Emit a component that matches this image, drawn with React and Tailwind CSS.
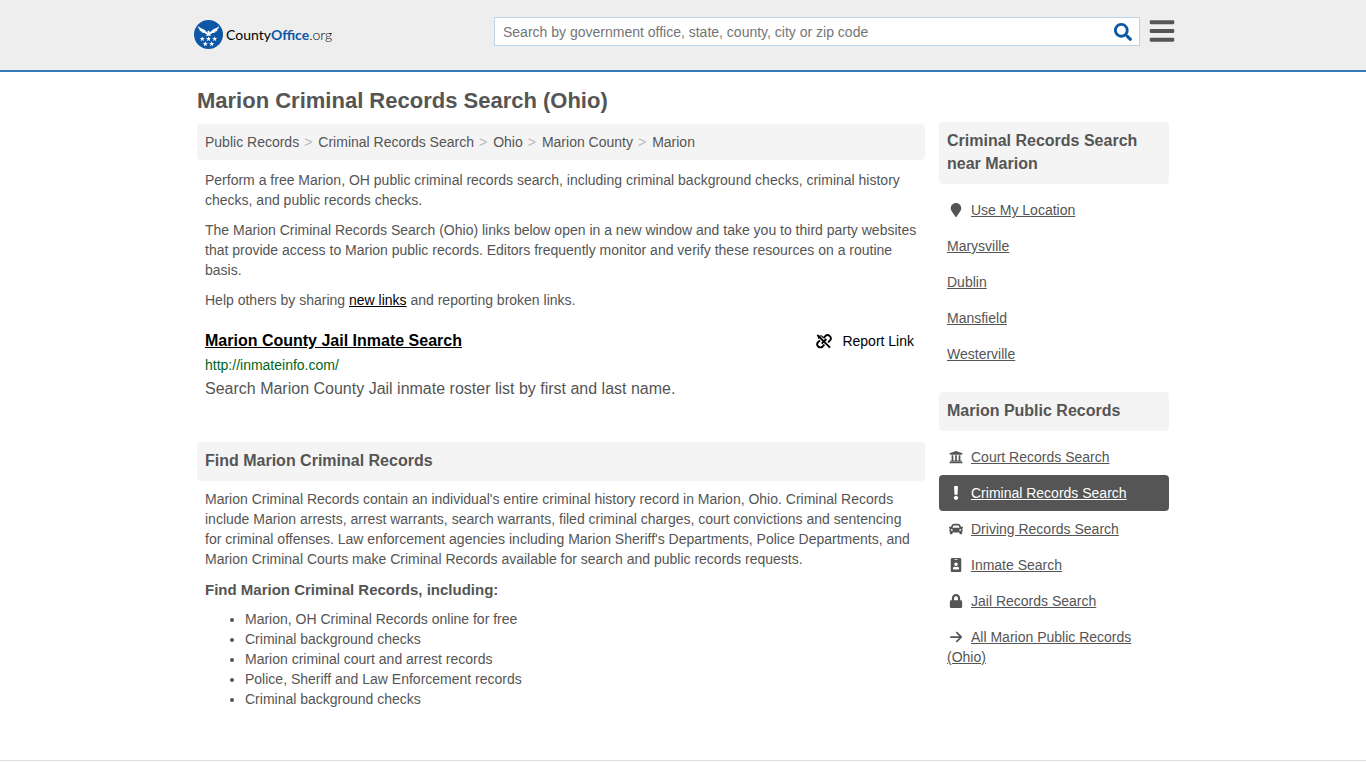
import {
  FaBars,
  FaCar,
  FaExclamation,
  FaIdBadge,
  FaLock,
  FaMapMarker,
  FaSearch,
  FaUniversity,
} from "react-icons/fa";
import { FaArrowRight } from "react-icons/fa6";

const crumbs = ["Public Records", "Criminal Records Search", "Ohio", "Marion County", "Marion"];

const nearby = [
  { label: "Use My Location", Icon: FaMapMarker },
  { label: "Marysville" },
  { label: "Dublin" },
  { label: "Mansfield" },
  { label: "Westerville" },
];

const records = [
  { label: "Court Records Search", Icon: FaUniversity },
  { label: "Criminal Records Search", Icon: FaExclamation, active: true },
  { label: "Driving Records Search", Icon: FaCar },
  { label: "Inmate Search", Icon: FaIdBadge },
  { label: "Jail Records Search", Icon: FaLock },
  { label: "All Marion Public Records (Ohio)", Icon: FaArrowRight },
];

const including = [
  "Marion, OH Criminal Records online for free",
  "Criminal background checks",
  "Marion criminal court and arrest records",
  "Police, Sheriff and Law Enforcement records",
  "Criminal background checks",
];

const STAR =
  "M0-2.700 .65-.9 2.570-.83 1.050 .34 1.590 2.180 0 1.100-1.590 2.180-1.050 .34-2.570-.83-.65-.9Z";
const stars = [
  [8.3, 19],
  [14.5, 19],
  [20.7, 19],
  [11.3, 24],
  [17.7, 24],
];

function Emblem() {
  return (
    <svg viewBox="0 0 29 29" className="size-[29px]" aria-hidden="true">
      <circle cx="14.5" cy="14.5" r="14.5" fill="#0d57a6" />
      <g fill="#fff">
        <path d="M4 6C5.500 8 8 8.300 10 9.600 11.300 10.500 12.300 11.600 13.200 12.800L14 11.900 13.100 11.300 14.500 10.600 15.600 11.500 15.800 12.800C16.700 11.600 17.700 10.500 19 9.600 21 8.300 23.500 8 25 6 25 7.800 24.200 9 22.800 9.600L23.900 9.700C23.200 11 22 11.600 20.700 11.800L21.600 12.100C20.600 13 19.400 13.200 18.200 13.100 17.500 14 16.700 14.500 15.900 14.700L17.300 16.300 14.500 15.500 11.700 16.300 13.100 14.700C12.300 14.500 11.500 14 10.800 13.100 9.600 13.200 8.400 13 7.400 12.100L8.300 11.800C7 11.600 5.800 11 5.100 9.700L6.200 9.600C4.800 9 4 7.800 4 6Z" />
        {stars.map(([x, y]) => (
          <path key={`${x}-${y}`} d={STAR} transform={`translate(${x} ${y})`} />
        ))}
      </g>
    </svg>
  );
}

function BrokenLinkIcon() {
  return (
    <svg
      viewBox="0 0 24 24"
      className="size-4"
      fill="none"
      stroke="currentColor"
      strokeWidth="2.8"
      aria-hidden="true"
    >
      <path d="M2 3 21 22" />
      <path d="M11.500 7.500 14 4.800A4.700 4.700 0 0 1 20.700 11.500L18 14" />
      <path d="M12.500 17.500 10 20.200A4.700 4.700 0 0 1 3.300 13.500L6 11" />
      <path d="M3.500 8.500C3.500 6 5.500 4 8 4L11.500 7.500" strokeWidth="1.600" />
      <path d="M15.500 9 8.500 16" />
    </svg>
  );
}

function SectionTitle({ children }) {
  return (
    <h2 className="rounded bg-[#f4f4f4] px-2 pt-[7px] pb-[9px] text-base leading-[23px] font-bold">
      {children}
    </h2>
  );
}

function SideList({ items }) {
  return (
    <ul className="mt-2">
      {items.map(({ label, Icon, active }) => (
        <li key={label} className={active ? "rounded bg-[#555] p-2 text-white" : "p-2"}>
          {Icon && (
            <span className="mr-1.5 inline-flex w-[18px] justify-center align-[-2px]">
              <Icon className="size-3.5" aria-hidden="true" />
            </span>
          )}
          <a href="#" className="underline">
            {label}
          </a>
        </li>
      ))}
    </ul>
  );
}

export default function App() {
  return (
    <div className="bg-white font-['Liberation_Sans',Arial,sans-serif] text-sm leading-5 text-[#555]">
      <header className="border-b-2 border-[#337ab7] bg-[#eee]">
        <div className="mx-auto flex h-[70px] max-w-[988px] items-start justify-between pr-px pl-[5px]">
          <a href="#" className="mt-5 flex items-center gap-[3px] text-black">
            <Emblem />
            <span className="font-[Lato,sans-serif] text-sm leading-5">
              County<b className="text-[#0d57a6]">Office</b>
              <span className="font-light">.org</span>
            </span>
          </a>
          <div className="mt-[17px] flex items-start gap-2">
            <form
              role="search"
              className="flex h-[29px] w-[646px] items-center border border-[#bcd4e8] bg-white"
            >
              <input
                type="text"
                aria-label="Search by government office, state, county, city or zip code"
                placeholder="Search by government office, state, county, city or zip code"
                className="min-w-0 flex-1 px-2 text-sm outline-none placeholder:text-[#757575]"
              />
              <button type="button" aria-label="Search" className="mr-[7px] text-[#0d57a6]">
                <FaSearch className="size-[18px]" />
              </button>
            </form>
            <button type="button" aria-label="Menu" className="text-[#555]">
              <FaBars className="size-7" />
            </button>
          </div>
        </div>
      </header>

      <div className="mx-auto flex max-w-[972px] items-start gap-3.5">
        <main className="min-w-0 flex-1 pb-[51px]">
          <h1 className="mt-4 text-[22px] leading-[26px] font-bold">
            Marion Criminal Records Search (Ohio)
          </h1>
          <nav aria-label="Breadcrumb" className="mt-2.5 rounded bg-[#f4f4f4] p-2">
            <ol className="flex flex-wrap">
              {crumbs.map((crumb, i) => (
                <li key={crumb}>
                  {i > 0 && <span className="pr-1.5 pl-[5px] text-[#bbb]">&gt;</span>}
                  <a href="#">{crumb}</a>
                </li>
              ))}
            </ol>
          </nav>

          <div className="mt-2.5 space-y-2.5 px-2">
            <p>
              Perform a free Marion, OH public criminal records search, including criminal
              background checks, criminal history checks, and public records checks.
            </p>
            <p>
              The Marion Criminal Records Search (Ohio) links below open in a new window and take
              you to third party websites that provide access to Marion public records. Editors
              frequently monitor and verify these resources on a routine basis.
            </p>
            <p>
              Help others by sharing{" "}
              <a href="#" className="text-black underline">
                new links
              </a>{" "}
              and reporting broken links.
            </p>
          </div>

          <article className="mt-5 px-2">
            <div className="flex items-center justify-between">
              <h2 className="text-base leading-[22px] font-bold text-black">
                <a href="#" className="underline">
                  Marion County Jail Inmate Search
                </a>
              </h2>
              <button type="button" className="mr-[3px] flex items-center gap-2.5 text-black">
                <BrokenLinkIcon />
                Report Link
              </button>
            </div>
            <div className="mt-[3px] text-[#006621]">http://inmateinfo.com/</div>
            <p className="mt-0.5 text-base leading-6">
              Search Marion County Jail inmate roster list by first and last name.
            </p>
          </article>

          <section className="mt-[41px]">
            <SectionTitle>Find Marion Criminal Records</SectionTitle>
            <div className="mt-2 px-2">
              <p>
                Marion Criminal Records contain an individual's entire criminal history record in
                Marion, Ohio. Criminal Records include Marion arrests, arrest warrants, search
                warrants, filed criminal charges, court convictions and sentencing for criminal
                offenses. Law enforcement agencies including Marion Sheriff's Departments, Police
                Departments, and Marion Criminal Courts make Criminal Records available for search
                and public records requests.
              </p>
              <h3 className="mt-2.5 text-[15px] leading-[22px] font-bold">
                Find Marion Criminal Records, including:
              </h3>
              <ul className="mt-2 list-disc pl-10">
                {including.map((item, i) => (
                  <li key={i}>{item}</li>
                ))}
              </ul>
            </div>
          </section>
        </main>

        <aside className="mt-[50px] w-[230px] shrink-0 space-y-5">
          <section>
            <SectionTitle>Criminal Records Search near Marion</SectionTitle>
            <SideList items={nearby} />
          </section>
          <section>
            <SectionTitle>Marion Public Records</SectionTitle>
            <SideList items={records} />
          </section>
        </aside>
      </div>
      <footer className="h-2 border-t border-[#ddd]" />
    </div>
  );
}
